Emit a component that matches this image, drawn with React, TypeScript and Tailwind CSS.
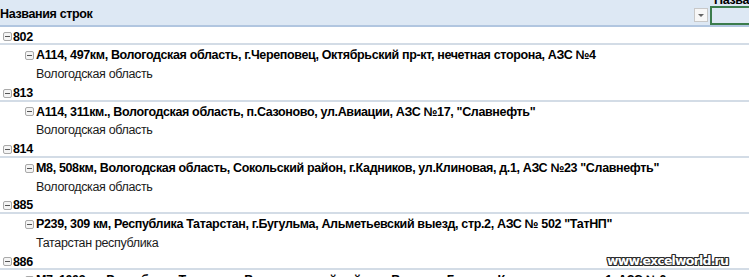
import React from "react";

type Row = { level: 0 | 1 | 2; text: string };

const rows: Row[] = [
  { level: 0, text: "802" },
  { level: 1, text: "А114, 497км, Вологодская область, г.Череповец, Октябрьский пр-кт, нечетная сторона, АЗС №4" },
  { level: 2, text: "Вологодская область" },
  { level: 0, text: "813" },
  { level: 1, text: "А114, 311км., Вологодская область, п.Сазоново, ул.Авиации, АЗС №17, \"Славнефть\"" },
  { level: 2, text: "Вологодская область" },
  { level: 0, text: "814" },
  { level: 1, text: "М8, 508км, Вологодская область, Сокольский район, г.Кадников, ул.Клиновая, д.1, АЗС №23 \"Славнефть\"" },
  { level: 2, text: "Вологодская область" },
  { level: 0, text: "885" },
  { level: 1, text: "Р239, 309 км, Республика Татарстан, г.Бугульма, Альметьевский выезд, стр.2, АЗС № 502 \"ТатНП\"" },
  { level: 2, text: "Татарстан республика" },
  { level: 0, text: "886" },
  { level: 1, text: "М7, 1003км, Республика Татарстан, Высокогорский район, с.Высокая Гора, ул.Кооперативная, д.1, АЗС №6" },
];

function Minus() {
  return (
    <span className="flex h-[9px] w-[9px] shrink-0 items-center justify-center rounded-[2px] border border-[#a9a9a9] bg-[#f4f4f4]">
      <span className="h-px w-[5px] bg-[#555]" />
    </span>
  );
}

function PivotRow({ row }: { row: Row }) {
  if (row.level === 2) {
    return (
      <div className="flex h-[18.75px] items-center pt-[2px] pl-[36px] font-normal text-[#1a1a1a]">
        {row.text}
      </div>
    );
  }
  return (
    <div
      className={
        row.level === 0
          ? "flex h-[18.75px] items-center gap-[1px] border-b-2 border-[#d3dce6] pt-[4px] pl-[3px] font-bold"
          : "flex h-[18.75px] items-center gap-[2px] pt-[2px] pl-[25px] font-bold"
      }
    >
      <Minus />
      <span className="whitespace-nowrap">{row.text}</span>
    </div>
  );
}

export default function App() {
  return (
    <div className="relative h-[277px] w-[749px] overflow-hidden bg-white font-['Liberation_Sans',sans-serif] text-[12.5px] tracking-[-0.35px] text-black">
      {/* header strip */}
      <div className="relative flex h-[26.5px] items-end border-b-2 border-[#b1c6e0] bg-[#dde8f4] pb-[1px]">
        <span className="font-bold">Названия строк</span>
        <span className="absolute top-[-9px] left-[714px] font-bold">Назва</span>
        <div className="absolute top-[8px] left-[694px] flex h-[14px] w-[14px] items-center justify-center border border-[#c8c8c8] bg-[#f7f7f7]">
          <span className="h-0 w-0 border-x-[3px] border-t-[3px] border-x-transparent border-t-[#666]" />
        </div>
        <div className="absolute top-[6px] left-[710px] h-[19px] w-[45px] border-2 border-[#3b7c4c]" />
      </div>

      {rows.map((r, i) => (
        <PivotRow key={i} row={r} />
      ))}

      <span className="absolute top-[252px] left-[607px] font-['DejaVu_Sans',sans-serif] text-[12.5px] font-bold tracking-[-0.8px] text-white [text-shadow:-1px_-1px_0_#2b2b2b,1px_-1px_0_#2b2b2b,-1px_1px_0_#2b2b2b,1px_1px_0_#2b2b2b,0_1px_0_#2b2b2b,0_-1px_0_#2b2b2b,1px_0_0_#2b2b2b,-1px_0_0_#2b2b2b]">
        www.excelworld.ru
      </span>
    </div>
  );
}
